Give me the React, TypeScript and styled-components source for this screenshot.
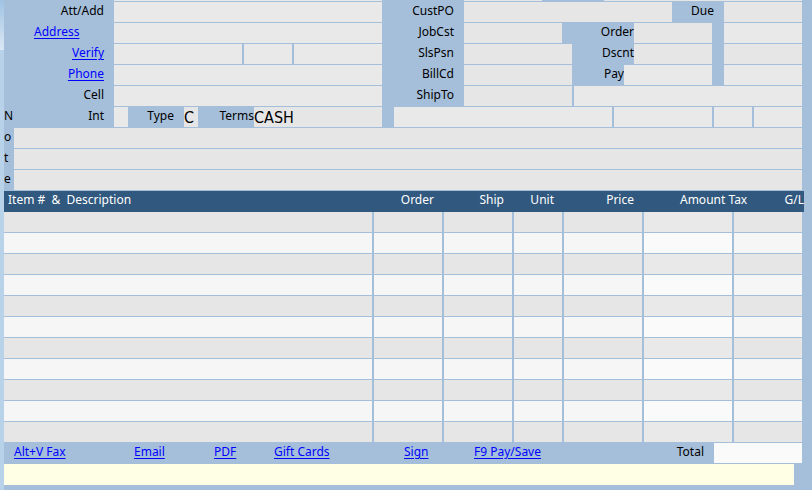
import React from "react";
import styled, { createGlobalStyle } from "styled-components";

const Global = createGlobalStyle`
  *, *::before, *::after { box-sizing: border-box; }
  body {
    margin: 0;
    background: #a5bfda;
    color: #000;
    font-family: "Noto Sans", "Open Sans", sans-serif;
    font-size: 12px;
    line-height: 18px;
  }
`;

const Page = styled.div`
  display: flex;
  min-height: 100vh;
`;

const Edge = styled.div`
  flex: 0 0 4px;
  background: linear-gradient(#9fc3e3 0, #dbe8f5 50px, #b8d2ea 50px);
`;

const Main = styled.main`
  flex: 1;
  min-width: 0;
  padding-right: 8px;
`;

const Form = styled.form`
  padding-right: 2px;
`;

const Row = styled.div<{ $sliver?: boolean }>`
  display: flex;
  height: ${(p) => (p.$sliver ? 1 : 20)}px;
  margin-bottom: 1px;
`;

const Half = styled.div<{ $grow?: boolean }>`
  display: flex;
  flex: ${(p) => (p.$grow ? "1 1 0" : "0 0 378px")};
  min-width: 0;
`;

const Label = styled.label<{ $w: number; $tight?: boolean }>`
  flex: 0 0 ${(p) => p.$w}px;
  padding-right: ${(p) => (p.$tight ? 0 : 10)}px;
  text-align: right;
  white-space: nowrap;
`;

const Letter = styled.span`
  flex: 0 0 10px;
`;

const Gap = styled.span<{ $w: number }>`
  flex: 0 0 ${(p) => p.$w}px;
`;

const Field = styled.input<{ $w?: number; $shade?: string }>`
  flex: ${(p) => (p.$w ? `0 0 ${p.$w}px` : "1 1 0")};
  min-width: 0;
  width: 0;
  height: 100%;
  margin: 0;
  padding: 0;
  border: 0;
  border-radius: 0;
  outline-offset: -1px;
  background: ${(p) => p.$shade ?? "#e9e9e9"};
  color: #000;
  font-family: "DejaVu Sans Condensed", "Noto Sans", sans-serif;
  font-size: 16px;
`;

const Link = styled.a`
  color: #0000ff;
  text-decoration: underline;
  text-underline-offset: 2px;
`;

const Items = styled.table`
  width: 100%;
  table-layout: fixed;
  border-collapse: collapse;
`;

const Col = styled.col<{ $w?: number }>`
  width: ${(p) => (p.$w ? `${p.$w}px` : "auto")};
`;

const Head = styled.th<{ $left?: boolean }>`
  height: 21px;
  padding: 0 ${(p) => (p.$left ? 0 : 10)}px 3px ${(p) => (p.$left ? 4 : 0)}px;
  background: #31587e;
  color: #fff;
  font-weight: normal;
  text-align: ${(p) => (p.$left ? "left" : "right")};
  white-space: pre;
`;

const TailHead = styled(Head)`
  padding: 0 0 3px 36px;
`;

const TailTitles = styled.div`
  display: flex;
  justify-content: space-between;
`;

const Cell = styled.td`
  height: 21px;
  padding: 0 2px 1px 0;
`;

const CellInput = styled(Field)`
  display: block;
  width: 100%;
  height: 20px;
`;

const Footer = styled.footer`
  display: flex;
  height: 21px;
  padding: 0 2px 1px 10px;
`;

const Action = styled.span<{ $w: number }>`
  flex: 0 0 ${(p) => p.$w}px;
  white-space: nowrap;
`;

const FooterLabel = styled.label`
  flex: 1;
  padding-right: 10px;
  text-align: right;
`;

const Status = styled.output`
  display: block;
  height: 21px;
  margin: 0 10px 0 0;
  background: #ffffe6;
`;

const DARK = "#e6e6e6";
const LIGHT = "#e9e9e9";

const columns = [
  { name: "Item", width: undefined },
  { name: "Order", width: 70 },
  { name: "Ship", width: 70 },
  { name: "Unit", width: 50 },
  { name: "Price", width: 80 },
  { name: "Amount", width: 90 },
  { name: "G/L", width: 70 },
];

const actions = [
  { label: "Alt+V Fax", width: 120 },
  { label: "Email", width: 80 },
  { label: "PDF", width: 60 },
  { label: "Gift Cards", width: 130 },
  { label: "Sign", width: 70 },
  { label: "F9 Pay/Save", width: 80 },
];

function shadeFor(row: number, name: string) {
  const amount = name === "Amount";
  if (row % 2 === 0) return amount ? LIGHT : DARK;
  return amount ? "#fafafa" : "#f6f6f6";
}

export default function App() {
  return (
    <Page>
      <Global />
      <Edge />
      <Main>
        <Form>
          <Row $sliver>
            <Half>
              <Gap $w={110} />
              <Field aria-label="Name" />
            </Half>
            <Half $grow>
              <Gap $w={82} />
              <Field aria-label="Date" $w={78} $shade={DARK} />
              <Gap $w={62} />
              <Field aria-label="Number" $shade={DARK} />
            </Half>
          </Row>
          <Row>
            <Half>
              <Label htmlFor="att" $w={110}>Att/Add</Label>
              <Field id="att" />
            </Half>
            <Half $grow>
              <Label htmlFor="custpo" $w={82}>CustPO</Label>
              <Field id="custpo" $shade={DARK} />
              <Label htmlFor="due" $w={52}>Due</Label>
              <Field id="due" $w={78} $shade={DARK} />
            </Half>
          </Row>
          <Row>
            <Half>
              <Gap $w={30} />
              <Action $w={80}><Link href="#address">Address</Link></Action>
              <Field aria-label="Address" />
            </Half>
            <Half $grow>
              <Label htmlFor="jobcst" $w={82}>JobCst</Label>
              <Field id="jobcst" $shade={DARK} />
              <Label htmlFor="order" $w={72} $tight>Order</Label>
              <Field id="order" $w={78} $shade={DARK} />
              <Gap $w={12} />
              <Field aria-label="Order amount" $w={78} />
            </Half>
          </Row>
          <Row>
            <Half>
              <Label as="span" $w={110}><Link href="#verify">Verify</Link></Label>
              <Field aria-label="City" $w={128} />
              <Gap $w={2} />
              <Field aria-label="State" $w={48} />
              <Gap $w={2} />
              <Field aria-label="Zip" />
            </Half>
            <Half $grow>
              <Label htmlFor="slspsn" $w={82}>SlsPsn</Label>
              <Field id="slspsn" $shade={DARK} />
              <Label htmlFor="dscnt" $w={62} $tight>Dscnt</Label>
              <Field id="dscnt" $w={78} $shade={DARK} />
              <Gap $w={12} />
              <Field aria-label="Discount amount" $w={78} $shade={DARK} />
            </Half>
          </Row>
          <Row>
            <Half>
              <Label as="span" $w={110}><Link href="#phone">Phone</Link></Label>
              <Field aria-label="Phone" />
            </Half>
            <Half $grow>
              <Label htmlFor="billcd" $w={82}>BillCd</Label>
              <Field id="billcd" $shade={DARK} />
              <Label htmlFor="pay" $w={52} $tight>Pay</Label>
              <Field id="pay" $w={88} />
              <Gap $w={12} />
              <Field aria-label="Pay amount" $w={78} />
            </Half>
          </Row>
          <Row>
            <Half>
              <Label htmlFor="cell" $w={110}>Cell</Label>
              <Field id="cell" />
            </Half>
            <Half $grow>
              <Label htmlFor="shipto" $w={82}>ShipTo</Label>
              <Field id="shipto" $shade={DARK} />
              <Gap $w={2} />
              <Field aria-label="Ship to name" $w={228} />
            </Half>
          </Row>
          <Row>
            <Half>
              <Letter>N</Letter>
              <Label htmlFor="int" $w={100}>Int</Label>
              <Field id="int" $w={14} />
              <Label htmlFor="type" $w={56}>Type</Label>
              <Field id="type" $w={14} $shade={DARK} defaultValue="C" />
              <Label htmlFor="terms" $w={56} $tight>Terms</Label>
              <Field id="terms" $shade={DARK} defaultValue="CASH" />
            </Half>
            <Half $grow>
              <Gap $w={12} />
              <Field aria-label="Ship to address" />
              <Gap $w={2} />
              <Field aria-label="Ship to city" $w={98} />
              <Gap $w={2} />
              <Field aria-label="Ship to state" $w={38} />
              <Gap $w={2} />
              <Field aria-label="Ship to zip" $w={48} />
            </Half>
          </Row>
          {["o", "t", "e"].map((letter, i) => (
            <Row key={letter}>
              <Letter>{letter}</Letter>
              <Field aria-label={`Note line ${i + 1}`} $shade={DARK} />
            </Row>
          ))}
        </Form>
        <Items>
          <colgroup>
            {columns.map((c) => <Col key={c.name} $w={c.width} />)}
          </colgroup>
          <thead>
            <tr>
              <Head $left>{"Item #  &  Description"}</Head>
              <Head>Order</Head>
              <Head>Ship</Head>
              <Head>Unit</Head>
              <Head>Price</Head>
              <TailHead colSpan={2}>
                <TailTitles><span>Amount Tax</span><span>G/L</span></TailTitles>
              </TailHead>
            </tr>
          </thead>
          <tbody>
            {Array.from({ length: 11 }, (_, r) => (
              <tr key={r}>
                {columns.map((c) => (
                  <Cell key={c.name}>
                    <CellInput aria-label={`${c.name}, line ${r + 1}`} $shade={shadeFor(r, c.name)} />
                  </Cell>
                ))}
              </tr>
            ))}
          </tbody>
        </Items>
        <Footer>
          {actions.map((a) => (
            <Action key={a.label} $w={a.width}><Link href="#action">{a.label}</Link></Action>
          ))}
          <FooterLabel htmlFor="total">Total</FooterLabel>
          <Field id="total" $w={88} $shade="#fafafa" />
        </Footer>
        <Status />
      </Main>
    </Page>
  );
}
